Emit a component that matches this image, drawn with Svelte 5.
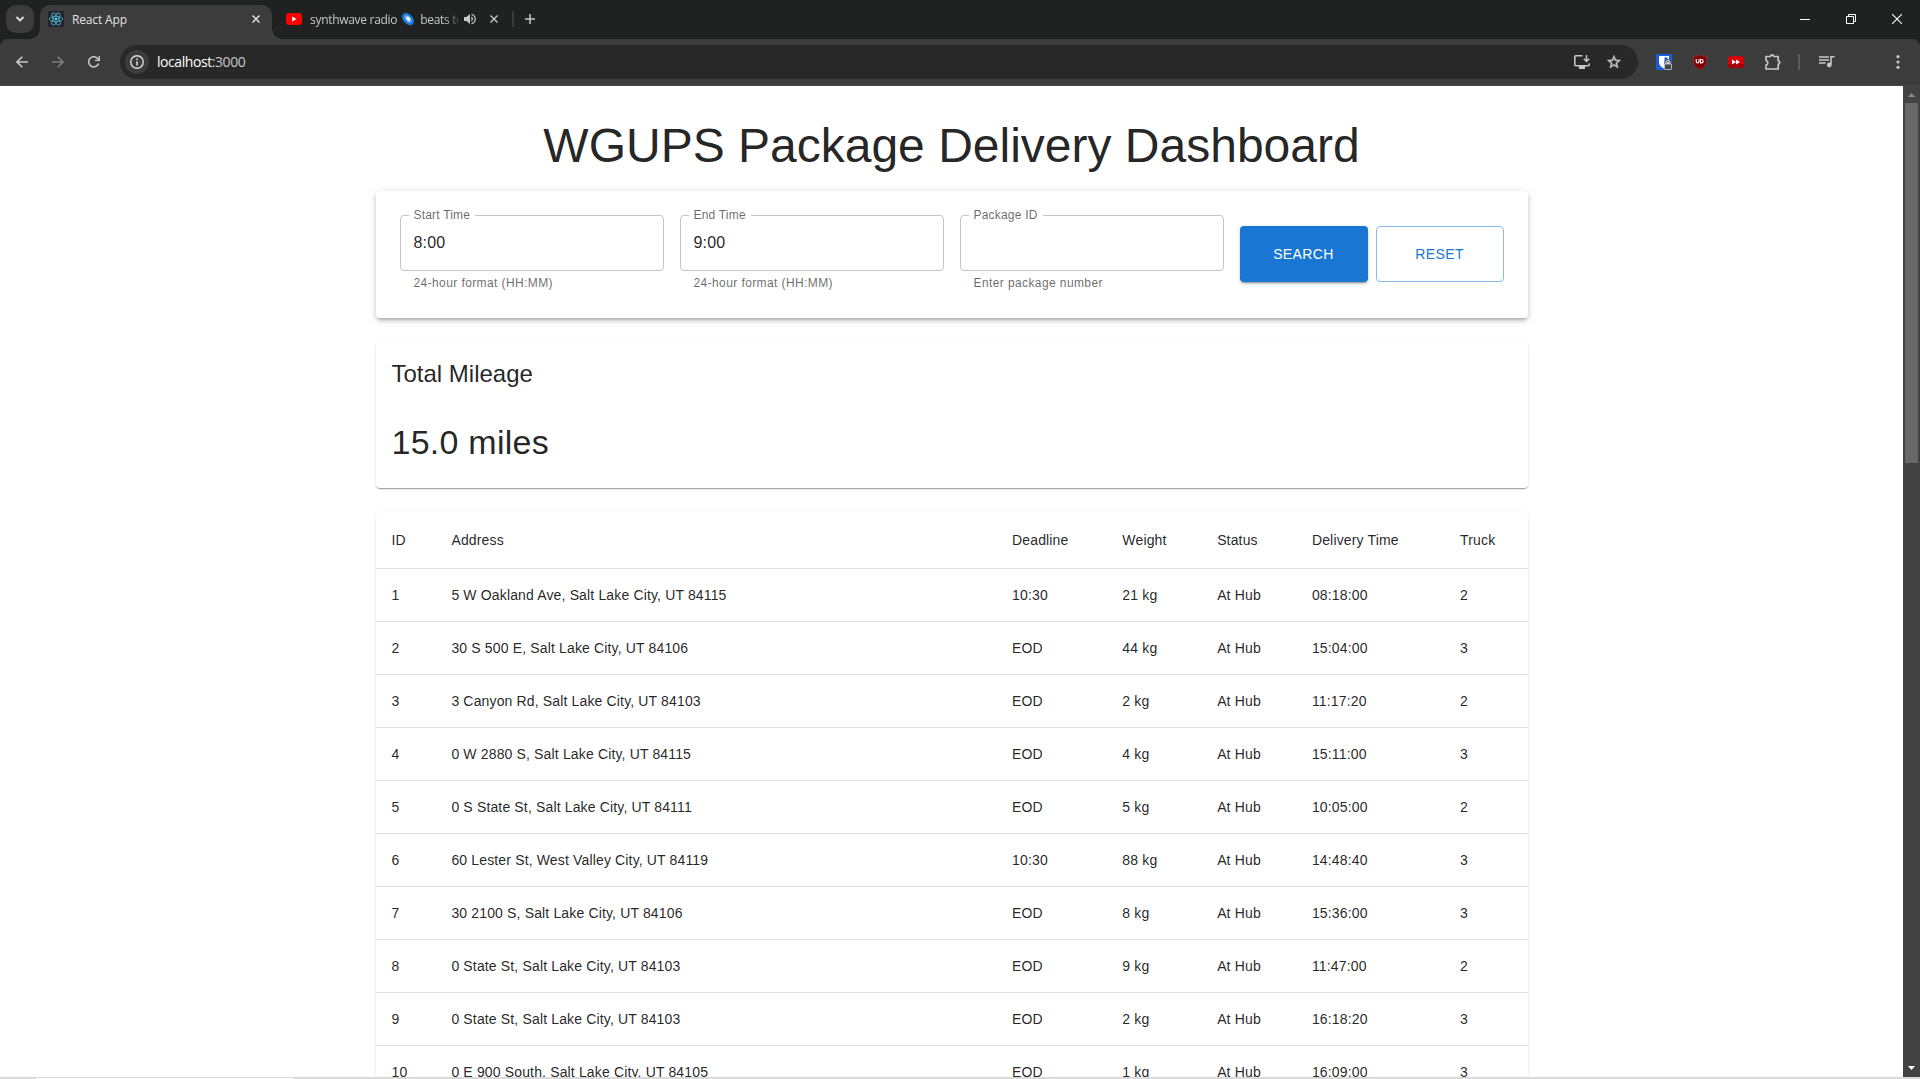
<script>
  const fields = [
    { label: 'Start Time', value: '8:00', help: '24-hour format (HH:MM)' },
    { label: 'End Time', value: '9:00', help: '24-hour format (HH:MM)' },
    { label: 'Package ID', value: '', help: 'Enter package number' }
  ];
  const columns = ['ID', 'Address', 'Deadline', 'Weight', 'Status', 'Delivery Time', 'Truck'];
  const rows = [
    [1, '5 W Oakland Ave, Salt Lake City, UT 84115', '10:30', '21 kg', 'At Hub', '08:18:00', 2],
    [2, '30 S 500 E, Salt Lake City, UT 84106', 'EOD', '44 kg', 'At Hub', '15:04:00', 3],
    [3, '3 Canyon Rd, Salt Lake City, UT 84103', 'EOD', '2 kg', 'At Hub', '11:17:20', 2],
    [4, '0 W 2880 S, Salt Lake City, UT 84115', 'EOD', '4 kg', 'At Hub', '15:11:00', 3],
    [5, '0 S State St, Salt Lake City, UT 84111', 'EOD', '5 kg', 'At Hub', '10:05:00', 2],
    [6, '60 Lester St, West Valley City, UT 84119', '10:30', '88 kg', 'At Hub', '14:48:40', 3],
    [7, '30 2100 S, Salt Lake City, UT 84106', 'EOD', '8 kg', 'At Hub', '15:36:00', 3],
    [8, '0 State St, Salt Lake City, UT 84103', 'EOD', '9 kg', 'At Hub', '11:47:00', 2],
    [9, '0 State St, Salt Lake City, UT 84103', 'EOD', '2 kg', 'At Hub', '16:18:20', 3],
    [10, '0 E 900 South, Salt Lake City, UT 84105', 'EOD', '1 kg', 'At Hub', '16:09:00', 3]
  ];
</script>

<div class="window">
  <header class="tabs">
    <button class="tab-search" aria-label="Search tabs">
      <svg width="10" height="10" viewBox="0 0 10 10"><path d="M1.5 3 5 6.5 8.5 3" fill="none" stroke="#e3e3e3" stroke-width="1.8" /></svg>
    </button>
    <div class="tab active">
      <svg class="favicon" width="16" height="16" viewBox="0 0 16 16">
        <rect width="16" height="16" rx="1.5" fill="#20232a" />
        <g fill="none" stroke="#4fa9c4" stroke-width="0.9">
          <ellipse cx="8" cy="8" rx="6.8" ry="2.6" />
          <ellipse cx="8" cy="8" rx="6.8" ry="2.6" transform="rotate(60 8 8)" />
          <ellipse cx="8" cy="8" rx="6.8" ry="2.6" transform="rotate(120 8 8)" />
        </g>
        <circle cx="8" cy="8" r="1.3" fill="#61dafb" />
      </svg>
      <span class="tab-title">React App</span>
      <svg class="close" width="8" height="8" viewBox="0 0 8 8"><path d="m.5.5 7 7m0-7-7 7" stroke="#e3e3e3" stroke-width="1.5" /></svg>
    </div>
    <div class="tab idle">
      <svg class="favicon" width="16" height="12" viewBox="0 0 16 12"><rect width="16" height="12" rx="3" fill="#f00" /><path d="M6.2 3.5v5L10.6 6z" fill="#fff" /></svg>
      <span class="tab-title fading">synthwave radio
        <svg class="galaxy" width="14" height="14" viewBox="0 0 14 14"><ellipse cx="7" cy="7" rx="7.2" ry="4.8" transform="rotate(48 7 7)" fill="#1677d2" /><ellipse cx="7" cy="7" rx="4.6" ry="2.6" transform="rotate(48 7 7)" fill="#6fa4f5" /><ellipse cx="7" cy="6.6" rx="2.4" ry="1.7" transform="rotate(48 7 7)" fill="#fff" /></svg>
        beats to</span>
      <svg class="speaker" width="12" height="12" viewBox="0 0 12 12"><path d="M0 4h2.500L6 1v10L2.500 8H0z" fill="#c7c7c7" /><path d="M7.500 4q1.700 2 0 4M7.500 1.200c5 1.500 5 8.100 0 9.600" fill="none" stroke="#c7c7c7" stroke-width="1.2" /></svg>
      <svg class="close" width="8" height="8" viewBox="0 0 8 8"><path d="m.5.5 7 7m0-7-7 7" stroke="#c7c7c7" stroke-width="1.4" /></svg>
    </div>
    <i class="tab-divider"></i>
    <svg class="plus" width="10" height="10" viewBox="0 0 10 10"><path d="M5 0v10M0 5h10" stroke="#c7c7c7" stroke-width="1.5" /></svg>
    <div class="controls">
      <svg width="10" height="10" viewBox="0 0 10 10"><path d="M0 5.500h10" stroke="#fff" /></svg>
      <svg width="10" height="10" viewBox="0 0 10 10"><path d="M.5 2.500h7v7h-7zM2.500 2.500v-2h7v7h-2" fill="none" stroke="#fff" /></svg>
      <svg width="10" height="10" viewBox="0 0 10 10"><path d="m0 0 10 10M10 0 0 10" stroke="#fff" stroke-width="1.1" /></svg>
    </div>
  </header>

  <nav class="toolbar">
    <div class="nav-icons">
      <svg width="12" height="12" viewBox="0 0 12 12"><path d="M12 6H1M6.300.7 1 6l5.300 5.300" fill="none" stroke="#c7c7c7" stroke-width="1.6" /></svg>
      <svg width="12" height="12" viewBox="0 0 12 12"><path d="M0 6h11M5.700.7 11 6l-5.300 5.300" fill="none" stroke="#7c7c7c" stroke-width="1.6" /></svg>
      <svg width="12" height="12" viewBox="0 0 12 12"><path d="M10.600 7.500A5.100 5.100 0 1 1 9.800 2.700L11 4.100" fill="none" stroke="#c7c7c7" stroke-width="1.6" /><path d="M12 0v5H7V3.700h3.500V0z" fill="#c7c7c7" /></svg>
    </div>
    <div class="omnibox">
      <span class="info"><svg width="14" height="14" viewBox="0 0 14 14"><circle cx="7" cy="7" r="6.200" fill="none" stroke="#dedede" stroke-width="1.400" /><path d="M7 6.200v4.300M7 3.500V5" stroke="#dedede" stroke-width="1.500" /></svg></span>
      <span class="url">localhost<span>:3000</span></span>
      <svg class="install" width="16" height="14" viewBox="0 0 16 14"><path d="M8.500.8H1.700q-.9 0-.9.900v8.100q0 .9.900.9h12.600q.9 0 .9-.9V8.500" fill="none" stroke="#c7c7c7" stroke-width="1.600" /><path d="M5 10.500h6V14H5z" fill="#c7c7c7" /><path d="M12.500 0v6M9.800 3.800l2.700 2.700 2.700-2.700" fill="none" stroke="#c7c7c7" stroke-width="1.500" /></svg>
      <svg width="16" height="16" viewBox="0 0 24 24"><path d="m22 9.240-7.190-.62L12 2 9.190 8.630 2 9.240l5.460 4.730L5.820 21 12 17.270 18.180 21l-1.630-7.030zM12 15.400l-3.760 2.270 1-4.280-3.320-2.880 4.380-.38L12 6.100l1.710 4.040 4.380.38-3.320 2.880 1 4.280z" fill="#c7c7c7" stroke="#c7c7c7" stroke-width=".8" /></svg>
    </div>
    <div class="extensions">
      <svg width="16" height="16" viewBox="0 0 16 16"><rect width="16" height="16" rx="1" fill="#175ddc" /><path d="M3 2h10v6q0 4-5 6.500Q3 12 3 8z" fill="#fff" /><path d="M8.500 3.500h3V8q0 2-3 4z" fill="#175ddc" /><path d="M9.800 10V8.700a2.200 2.200 0 0 1 4.400 0V10" fill="none" stroke="#444" stroke-width="2.400" /><path d="M10 10V8.500a2 2 0 0 1 4 0V10" fill="none" stroke="#ddd" stroke-width="1.100" /><rect x="8.400" y="10" width="7.200" height="5.600" rx="1" fill="#444" stroke="#ddd" stroke-width=".8" /></svg>
      <svg width="16" height="16" viewBox="0 0 16 16"><path d="M8 .5q3 2 6.500 2v5Q14.500 13 8 15.500 1.500 13 1.500 7.500v-5Q5 2.500 8 .5z" fill="#800000" stroke="#a33b3b" stroke-width=".6" /><path d="M4.200 5v2.500a1.300 1.300 0 0 0 2.800 0V5M8.500 5.500v3.400h1a1.700 1.700 0 0 0 0-3.400z" fill="none" stroke="#fff" stroke-width="1.100" /></svg>
      <svg width="16" height="16" viewBox="0 0 16 16"><rect y="2" width="16" height="12" rx="3" fill="#d5040b" /><path d="M0 10h16v1q0 3-3 3H3q-3 0-3-3z" fill="#a70008" /><path d="M4 5.500 8 8l-4 2.500zm4 0L12 8l-4 2.500z" fill="#fff" /></svg>
      <svg width="18" height="18" viewBox="0 0 18 18"><path d="M2 3.500h4.500a1.600 1.600 0 0 1 3.200 0h4.500V8a1.600 1.600 0 0 1 0 3.200V16H2v-4a2.300 2.300 0 0 0 0-4.500z" fill="none" stroke="#c7c7c7" stroke-width="1.700" stroke-linejoin="round" /></svg>
    </div>
    <i class="bar"></i>
    <svg class="media" width="16" height="14" viewBox="0 0 16 14"><path d="M0 2h10M0 5h10M0 8h6.500M12 9.500V1.800h3.500" fill="none" stroke="#c7c7c7" stroke-width="1.600" /><circle cx="10.300" cy="10" r="2.400" fill="#c7c7c7" /></svg>
    <svg class="menu" width="4" height="14" viewBox="0 0 4 14"><g fill="#c7c7c7"><circle cx="2" cy="1.700" r="1.600" /><circle cx="2" cy="7" r="1.600" /><circle cx="2" cy="12.300" r="1.600" /></g></svg>
  </nav>

  <div class="viewport">
    <main>
      <div class="container">
        <h1>WGUPS Package Delivery Dashboard</h1>

        <form class="paper search">
          {#each fields as f}
            <div class="field">
              <fieldset>
                <legend>{f.label}</legend>
                <div class="value">{f.value}</div>
              </fieldset>
              <p>{f.help}</p>
            </div>
          {/each}
          <div class="actions">
            <button type="button" class="primary">SEARCH</button>
            <button type="button" class="outlined">RESET</button>
          </div>
        </form>

        <section class="paper mileage">
          <h2>Total Mileage</h2>
          <div class="miles">15.0 miles</div>
        </section>

        <section class="paper">
          <table>
            <colgroup>
              <col class="c-id" /><col /><col class="c-deadline" /><col class="c-weight" /><col class="c-status" /><col class="c-time" /><col class="c-truck" />
            </colgroup>
            <thead>
              <tr>{#each columns as c}<th>{c}</th>{/each}</tr>
            </thead>
            <tbody>
              {#each rows as row}
                <tr>{#each row as cell}<td>{cell}</td>{/each}</tr>
              {/each}
            </tbody>
          </table>
        </section>
      </div>
    </main>
    <aside class="scrollbar">
      <svg width="7" height="4" viewBox="0 0 7 4"><path d="M0 4 3.500 0 7 4z" fill="#8b8b8b" /></svg>
      <div class="thumb"></div>
      <svg class="down" width="7" height="4" viewBox="0 0 7 4"><path d="M0 0h7L3.500 4z" fill="#fff" /></svg>
    </aside>
  </div>
  <footer class="edge"><i></i></footer>
</div>

<style>
  :global(body) { margin: 0; overflow: hidden; }
  * { box-sizing: border-box; }
  svg { display: block; flex: none; }
  button { padding: 0; border: 0; font: inherit; }

  .window {
    display: flex;
    flex-direction: column;
    width: 1920px;
    height: 1079px;
    overflow: hidden;
    background: #202221;
    font-family: 'Liberation Sans', Arial, sans-serif;
  }

  /* Tab strip */
  .tabs {
    display: flex;
    align-items: flex-start;
    height: 39px;
    flex: none;
    padding: 5px 0 0 6px;
    font: 12px/28px 'Open Sans', 'Noto Sans', sans-serif;
    letter-spacing: -0.15px;
    color: #e3e3e3;
  }
  .tab-search {
    display: grid;
    place-items: center;
    width: 28px;
    height: 28px;
    border-radius: 10px;
    background: #3c3c3c;
  }
  .tab { display: flex; align-items: center; height: 28px; }
  .tab.active {
    position: relative;
    width: 232px;
    height: 34px;
    margin-left: 6px;
    padding: 0 12px 6px 8px;
    border-radius: 10px 10px 0 0;
    background: #3c3c3c;
  }
  .tab.active::before,
  .tab.active::after {
    content: '';
    position: absolute;
    bottom: 0;
    width: 10px;
    height: 10px;
  }
  .tab.active::before { left: -10px; background: radial-gradient(circle at 0 0, transparent 9.500px, #3c3c3c 10px); }
  .tab.active::after { right: -10px; background: radial-gradient(circle at 100% 0, transparent 9.500px, #3c3c3c 10px); }
  .tab-title { flex: 1; margin-left: 8px; padding-top: 2px; white-space: nowrap; }
  .tab.idle { width: 239px; padding-left: 14px; color: #c7c7c7; }
  .fading {
    display: flex;
    flex: none;
    gap: 4px;
    align-items: center;
    width: 148px;
    letter-spacing: -0.3px;
    mask-image: linear-gradient(to right, #000 134px, transparent 152px);
  }
  .galaxy { margin: -2px 1px 0 0; }
  .speaker { margin-left: 6px; }
  .idle .close { margin-left: 14px; }
  .tab-divider { width: 2px; height: 16px; margin: 6px 11px 0 1px; background: #3c3c3c; }
  .plus { margin-top: 9px; }
  .controls { display: flex; gap: 36px; margin: 9px 18px 0 auto; }

  /* Toolbar */
  .toolbar {
    display: flex;
    align-items: center;
    flex: none;
    height: 47px;
    padding: 0 20px 1px 16px;
    border-bottom: 1px solid #474747;
    border-radius: 8px 8px 0 0;
    background: #3c3c3c;
  }
  .nav-icons { display: flex; gap: 24px; width: 104px; }
  .omnibox {
    display: flex;
    align-items: center;
    width: 1518px;
    height: 34px;
    padding: 0 16px 0 5px;
    border-radius: 17px;
    background: #282828;
  }
  .info {
    display: grid;
    place-items: center;
    width: 24px;
    height: 24px;
    border-radius: 50%;
    background: #3c3c3c;
  }
  .url {
    margin-left: 8px;
    color: #fff;
    font: 14px/20px 'Open Sans', 'Noto Sans', sans-serif;
    letter-spacing: -0.43px;
  }
  .url span { color: #c7c7c7; }
  .install { margin: 0 16px 0 auto; }
  .extensions { display: flex; align-items: center; gap: 20px; margin-left: 18px; }
  .bar { width: 2px; height: 16px; margin: 0 19px 0 16px; background: #5c5c5c; }
  .menu { margin-left: auto; }

  /* Page */
  .viewport { display: flex; flex: 1; min-height: 0; overflow: hidden; background: #fff; }
  main { flex: 1; overflow: hidden; color: rgba(0, 0, 0, 0.87); }
  .container { width: 1152px; margin: 32px auto 0; }
  h1 { margin: 0 0 16.800px; font-size: 48px; font-weight: 400; line-height: 56px; text-align: center; }
  .paper {
    border-radius: 4px;
    background: #fff;
    box-shadow: 0 2px 1px -1px rgba(0, 0, 0, 0.2), 0 1px 1px rgba(0, 0, 0, 0.14), 0 1px 3px rgba(0, 0, 0, 0.12);
  }
  .search {
    display: grid;
    grid-template-columns: repeat(3, 264px) 264px;
    align-items: center;
    gap: 16px;
    height: 126.900px;
    padding: 24px;
    margin-bottom: 24px;
    box-shadow: 0 3px 3px -2px rgba(0, 0, 0, 0.2), 0 3px 4px rgba(0, 0, 0, 0.14), 0 1px 8px rgba(0, 0, 0, 0.12);
  }
  fieldset {
    height: 61px;
    min-width: 0;
    margin: -5px 0 0;
    padding: 0 13px 0 8px;
    border: 1px solid rgba(0, 0, 0, 0.23);
    border-radius: 4px;
  }
  legend {
    height: 12px;
    padding: 0 5px;
    color: rgba(0, 0, 0, 0.6);
    font-size: 12px;
    line-height: 11px;
    letter-spacing: 0.2px;
  }
  .value { height: 23px; margin-top: 9px; padding-left: 5px; font-size: 16px; line-height: 23px; letter-spacing: 0.15px; }
  .field p {
    margin: 3px 14px 0;
    color: rgba(0, 0, 0, 0.6);
    font-size: 12px;
    line-height: 19.920px;
    letter-spacing: 0.4px;
  }
  .actions { display: flex; gap: 8px; }
  .actions button { width: 128px; height: 56px; border-radius: 4px; font-size: 14px; letter-spacing: 0.4px; }
  .primary {
    color: #fff;
    background: #1976d2;
    box-shadow: 0 3px 1px -2px rgba(0, 0, 0, 0.2), 0 2px 2px rgba(0, 0, 0, 0.14), 0 1px 5px rgba(0, 0, 0, 0.12);
  }
  .actions .outlined { border: 1px solid rgba(25, 118, 210, 0.5); color: #1976d2; background: none; }

  .mileage { padding: 16px 16px 25px; margin-bottom: 24px; }
  h2 { margin: 0 0 8.400px; font-size: 24px; font-weight: 400; line-height: 32px; }
  .miles { padding-top: 23px; font-size: 34px; line-height: 42px; letter-spacing: 0.25px; }

  table { width: 100%; table-layout: fixed; border-collapse: separate; border-spacing: 0; font-size: 14px; letter-spacing: 0.15px; }
  th, td {
    padding: 16px;
    border-bottom: 1px solid #e0e0e0;
    text-align: left;
    font-weight: 400;
    line-height: 20px;
    white-space: nowrap;
  }
  th { line-height: 24px; }
  .c-id { width: 59.900px; }
  .c-deadline { width: 110.300px; }
  .c-weight { width: 94.800px; }
  .c-status { width: 94.800px; }
  .c-time { width: 148.200px; }
  .c-truck { width: 83.400px; }

  .scrollbar {
    display: flex;
    flex-direction: column;
    align-items: center;
    width: 17px;
    padding: 7px 0;
    background: #424242;
  }
  .thumb { width: 13px; height: 360px; margin-top: 6px; background: #686868; }
  .down { margin-top: auto; }

  .edge { display: flex; align-items: flex-end; height: 2px; flex: none; padding-left: 36px; background: #dadada; }
  .edge i { width: 257px; height: 1px; background: #fff; }
</style>
